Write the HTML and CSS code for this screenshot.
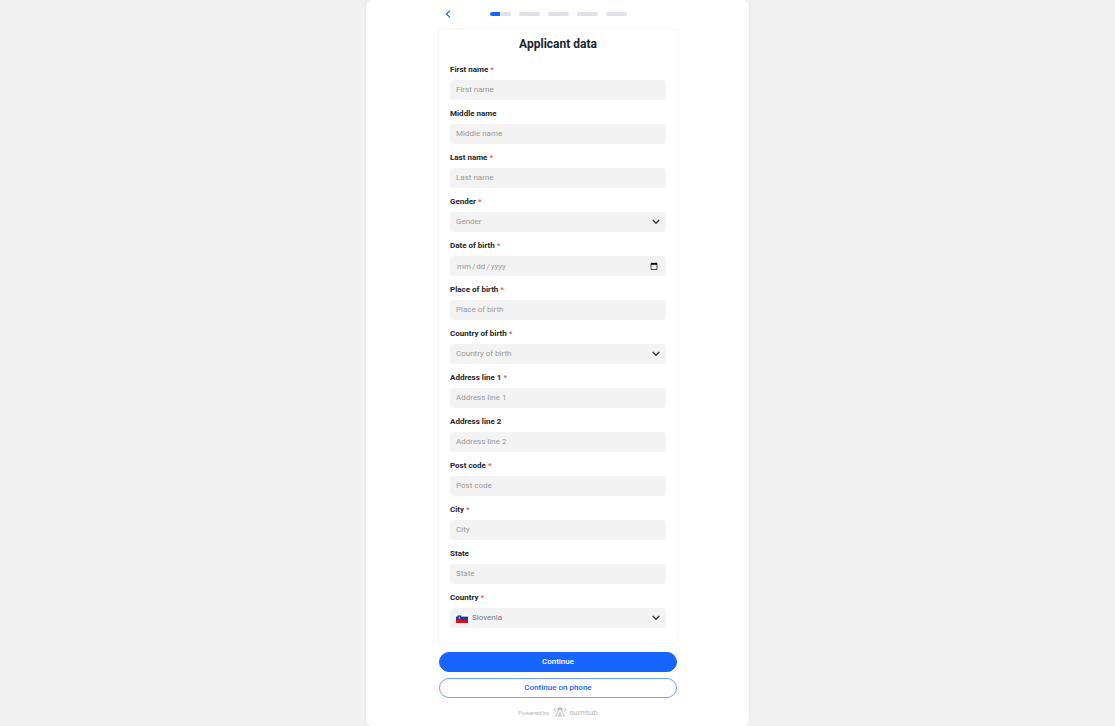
FILE: index.html
```html
<!DOCTYPE html>
<html lang="en">
<head>
    <meta charset="UTF-8">
    <meta name="viewport" content="width=device-width, initial-scale=1.0">
    <title>Applicant data</title>
    <link rel="stylesheet" href="styles.css">
</head>
<body>
    <main class="panel">
        <!-- Back button and progress -->
        <header class="top-bar">
            <button class="back-button" type="button" aria-label="Back">
                <svg width="6" height="8" viewBox="0 0 6 8"><path d="M4.8 0.8L1.4 4l3.4 3.2" fill="none" stroke="#1764ff" stroke-width="1.2"/></svg>
            </button>
            <div class="steps">
                <span class="step current"></span>
                <span class="step"></span>
                <span class="step"></span>
                <span class="step"></span>
                <span class="step"></span>
            </div>
        </header>

        <form class="form">
            <div class="card">
                <h1>Applicant data</h1>

                <div class="field">
                    <label for="firstName">First name <span class="required">*</span></label>
                    <input type="text" id="firstName" placeholder="First name">
                </div>
                <div class="field">
                    <label for="middleName">Middle name</label>
                    <input type="text" id="middleName" placeholder="Middle name">
                </div>
                <div class="field">
                    <label for="lastName">Last name <span class="required">*</span></label>
                    <input type="text" id="lastName" placeholder="Last name">
                </div>
                <div class="field">
                    <label for="gender">Gender <span class="required">*</span></label>
                    <div class="select-box">
                        <select id="gender">
                            <option value="">Gender</option>
                            <option>Male</option>
                            <option>Female</option>
                        </select>
                        <svg class="chevron" width="8" height="6" viewBox="0 0 8 6"><path d="M0.8 1L4 4.3 7.2 1" fill="none" stroke="#333" stroke-width="1.3"/></svg>
                    </div>
                </div>
                <div class="field">
                    <label for="birthDate">Date of birth <span class="required">*</span></label>
                    <input type="date" id="birthDate">
                </div>
                <div class="field">
                    <label for="birthPlace">Place of birth <span class="required">*</span></label>
                    <input type="text" id="birthPlace" placeholder="Place of birth">
                </div>
                <div class="field">
                    <label for="birthCountry">Country of birth <span class="required">*</span></label>
                    <div class="select-box">
                        <select id="birthCountry">
                            <option value="">Country of birth</option>
                            <option>Slovenia</option>
                        </select>
                        <svg class="chevron" width="8" height="6" viewBox="0 0 8 6"><path d="M0.8 1L4 4.3 7.2 1" fill="none" stroke="#333" stroke-width="1.3"/></svg>
                    </div>
                </div>
                <div class="field">
                    <label for="address1">Address line 1 <span class="required">*</span></label>
                    <input type="text" id="address1" placeholder="Address line 1">
                </div>
                <div class="field">
                    <label for="address2">Address line 2</label>
                    <input type="text" id="address2" placeholder="Address line 2">
                </div>
                <div class="field">
                    <label for="postCode">Post code <span class="required">*</span></label>
                    <input type="text" id="postCode" placeholder="Post code">
                </div>
                <div class="field">
                    <label for="city">City <span class="required">*</span></label>
                    <input type="text" id="city" placeholder="City">
                </div>
                <div class="field">
                    <label for="state">State</label>
                    <input type="text" id="state" placeholder="State">
                </div>
                <div class="field">
                    <label for="country">Country <span class="required">*</span></label>
                    <div class="select-box with-flag">
                        <!-- Flag of Slovenia -->
                        <svg class="flag" width="12" height="9" viewBox="0 0 12 9">
                            <path fill="#fff" d="M0 0h12v3H0z"/>
                            <path fill="#2337a4" d="M0 2.6h12V6H0z"/>
                            <path fill="#d4131b" d="M0 6h12v3H0z"/>
                            <path fill="#2a3a9c" stroke="#8d3b6b" stroke-width="0.3" d="M1.6 1.4h3.6v2.8Q5 5.4 3.4 6 1.8 5.4 1.6 4.2z"/>
                            <path fill="#e4e6f5" d="M2.3 4.6l0.5-0.9 0.6-0.9 0.6 0.9 0.5 0.9z"/>
                        </svg>
                        <select id="country" class="filled">
                            <option>Slovenia</option>
                        </select>
                        <svg class="chevron" width="8" height="6" viewBox="0 0 8 6"><path d="M0.8 1L4 4.3 7.2 1" fill="none" stroke="#333" stroke-width="1.3"/></svg>
                    </div>
                </div>
            </div>

            <button class="button primary" type="submit">Continue</button>
            <button class="button outline" type="button">Continue on phone</button>
        </form>

        <footer class="powered">
            <span>Powered by</span>
            <svg width="14" height="11" viewBox="0 0 14 11" fill="none" stroke="#b5b5b5">
                <path fill="#b5b5b5" stroke="none" d="M4.4 2Q4.8 0.3 7 0.3T9.6 2z"/>
                <path d="M3.4 2.6h7.2" stroke-width="0.9"/>
                <path d="M0.4 2.1l1.7 1M1.9 3.1l0.6 1.5M13.6 2.1l-1.7 1M12.1 3.1l-0.6 1.5" stroke-width="1"/>
                <path d="M4.2 4.8l1.6-0.4M9.8 4.8L8.2 4.4" stroke-width="0.9"/>
                <path d="M4.2 6L2.6 10M9.8 6l1.6 4M5 9.8L7 5.8l2 4M5.8 8.2h2.4" stroke-width="0.9"/>
            </svg>
            <span class="brand">sumsub</span>
        </footer>
    </main>
</body>
</html>
```
FILE: styles.css
```css
* {
    box-sizing: border-box;
}

body {
    margin: 0;
    background-color: #f1f1f1;
    font-family: Roboto, sans-serif;
    font-size: 8px;
    color: #20252c;
}

.panel {
    max-width: 383px;
    min-height: 100vh;
    margin: 0 auto;
    padding: 0 71px 0 72px;
    background-color: #fff;
    border-radius: 6px;
    box-shadow: 0 0 3px rgba(0, 0, 0, 0.08);
}

/* Top bar */
.top-bar {
    display: grid;
    grid-template-columns: 20px 1fr 20px;
    align-items: center;
    height: 28px;
}

.back-button {
    display: flex;
    justify-content: center;
    align-items: center;
    height: 20px;
    padding: 0;
    border: none;
    background: none;
    cursor: pointer;
}

.steps {
    display: flex;
    justify-content: center;
    gap: 8px;
}

.step {
    width: 21px;
    height: 4px;
    border-radius: 2px;
    background-color: #dfe2e8;
}

.step.current {
    background-image: linear-gradient(to right, #1764ff 50%, transparent 50%);
}

/* Form */
.form {
    display: flex;
    flex-direction: column;
}

.card {
    display: flex;
    flex-direction: column;
    gap: 8px;
    padding: 7px 11px 15px;
    border: 1px solid #f6f6f6;
    border-radius: 4px;
}

h1 {
    margin: 0 0 4px;
    font-size: 12px;
    line-height: 16px;
    font-weight: 700;
    text-align: center;
}

.field {
    display: flex;
    flex-direction: column;
    gap: 4px;
}

label {
    line-height: 12px;
    font-weight: 700;
}

.required {
    color: #f05c5c;
}

input,
select {
    width: 100%;
    height: 20px;
    padding: 0 6px 2px;
    border: none;
    border-radius: 4px;
    outline: none;
    background-color: #f3f3f3;
    font-family: inherit;
    font-size: 8px;
    color: #999;
}

input::placeholder {
    color: #999;
}

input[type="date"] {
    padding-bottom: 0;
}

input::-webkit-datetime-edit-text {
    padding: 0;
}

select {
    appearance: none;
}

select.filled {
    color: #737985;
}

.select-box {
    position: relative;
}

.with-flag select {
    padding-left: 22px;
}

.chevron {
    position: absolute;
    top: 7px;
    right: 6px;
    pointer-events: none;
}

.flag {
    position: absolute;
    top: 6px;
    left: 6px;
}

/* Buttons */
.button {
    height: 20px;
    margin: 0 1px;
    padding: 0 6px 2px;
    border: 1px solid #1764ff;
    border-radius: 10px;
    font-family: inherit;
    font-size: 8px;
    font-weight: 500;
    cursor: pointer;
}

.primary {
    margin-top: 8px;
    background-color: #1764ff;
    color: #fff;
}

.outline {
    margin-top: 6px;
    border-color: #74a2ff;
    background-color: #fff;
    color: #1764ff;
}

/* Footer */
.powered {
    display: flex;
    justify-content: center;
    align-items: center;
    gap: 4px;
    height: 28px;
    font-size: 6px;
    color: #b9b9b9;
}

.brand {
    margin-left: -2px;
    font-size: 8px;
}
```
